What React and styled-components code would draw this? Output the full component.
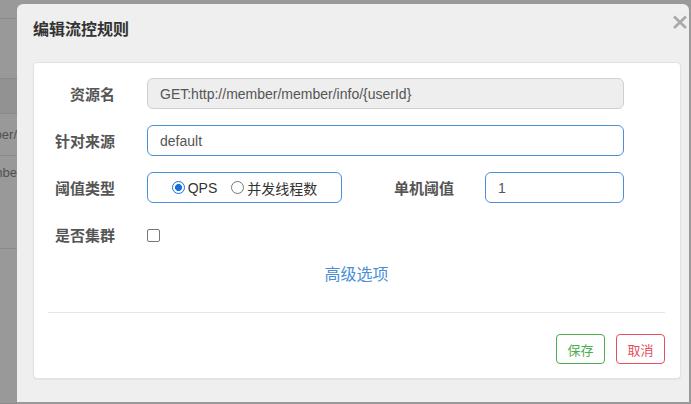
import React from "react";
import styled, { createGlobalStyle } from "styled-components";

const FONT = `"Liberation Sans", "Noto Sans CJK SC", sans-serif`;

const GlobalStyle = createGlobalStyle`
  html, body {
    margin: 0;
    padding: 0;
    width: 691px;
    height: 404px;
    overflow: hidden;
    background: #fff;
    font-family: ${FONT};
  }
  * { box-sizing: border-box; }
`;

/* ---------- background page (dimmed by backdrop) ---------- */
const Page = styled.div`
  display: flex;
  flex-direction: column;
  width: 691px;
  height: 404px;
  background: #fff;
`;

const PageRow = styled.div`
  display: flex;
  justify-content: flex-end;
  align-items: ${(p) => (p.$top ? "flex-start" : "center")};
  width: 17px;
  height: ${(p) => p.$h}px;
  padding-top: ${(p) => (p.$top ? 9 : 0)}px;
  border-bottom: 1px solid #e6e6e6;
  background: ${(p) => (p.$head ? "#f4f4f4" : "#fff")};
  overflow: hidden;
  white-space: nowrap;
  font-size: 13px;
  color: #888;
  flex-shrink: 0;
`;

const Backdrop = styled.div`
  position: fixed;
  inset: 0;
  background: rgba(0, 0, 0, 0.4);
`;

/* ---------- modal ---------- */
const Modal = styled.div`
  position: fixed;
  left: 17px;
  top: 4px;
  width: 672px;
  height: 398px;
  display: flex;
  flex-direction: column;
  padding: 0 8px 0 16px;
  background: #efefef;
  border-radius: 6px 6px 0 0;
`;

const ModalHeader = styled.div`
  display: flex;
  justify-content: space-between;
  align-items: flex-start;
  height: 58px;
  padding: 11px 0 0 0;
  margin-right: -6px;
  flex-shrink: 0;
`;

const Title = styled.h4`
  margin: 0;
  padding-top: 4px;
  font-size: 16px;
  line-height: 22px;
  font-weight: bold;
  color: #333;
`;

const CloseButton = styled.button`
  border: 0;
  background: none;
  padding: 0;
  width: 14px;
  height: 14px;
  display: flex;
  cursor: pointer;
`;

const Card = styled.div`
  display: flex;
  flex-direction: column;
  height: 317px;
  padding: 15px 15px 14px 14px;
  background: #fff;
  border: 1px solid #e2e2e2;
  border-radius: 4px;
  box-shadow: 0 1px 1px rgba(0, 0, 0, 0.05);
`;

const Form = styled.div`
  display: flex;
  flex-direction: column;
  gap: 16px;
`;

const FormRow = styled.div`
  display: flex;
  align-items: center;
  height: 31px;
`;

const Label = styled.label`
  width: ${(p) => p.$w || 67}px;
  margin-right: ${(p) => p.$gap || 32}px;
  flex-shrink: 0;
  text-align: right;
  font-size: 15px;
  font-weight: bold;
  color: #555;
  white-space: nowrap;
`;

const TextInput = styled.input`
  width: ${(p) => p.$w}px;
  height: 31px;
  padding: 0 12px;
  border: 1px solid ${(p) => (p.disabled ? "#cfcfcf" : "#4a8fd8")};
  border-radius: 6px;
  background: ${(p) => (p.disabled ? "#eee" : "#fff")};
  font-family: ${FONT};
  font-size: 14px;
  color: #555;
  -webkit-text-fill-color: #555;
  opacity: 1;
  outline: none;
`;

const RadioGroup = styled.div`
  display: flex;
  align-items: center;
  justify-content: center;
  width: 195px;
  height: 31px;
  border: 1px solid #4a8fd8;
  border-radius: 6px;
  font-size: 14px;
  color: #333;
`;

const RadioOption = styled.label`
  display: flex;
  align-items: center;
  gap: 3px;
  margin-left: ${(p) => (p.$first ? 0 : 14)}px;
`;

const RadioDot = styled.span`
  width: 13px;
  height: 13px;
  border-radius: 50%;
  flex-shrink: 0;
  border: ${(p) => (p.$checked ? "1.5px solid #1a6fe0" : "1px solid #777")};
  background: ${(p) =>
    p.$checked
      ? "radial-gradient(circle, #1a6fe0 0 3.2px, #fff 3.8px)"
      : "#fff"};
`;

const Checkbox = styled.span`
  width: 13px;
  height: 13px;
  border: 1px solid #777;
  border-radius: 2px;
  background: #fff;
  margin-top: 2px;
`;

const AdvancedLink = styled.a`
  align-self: center;
  margin-top: 14px;
  font-size: 16px;
  line-height: 22px;
  color: #4a8fd6;
  text-decoration: none;
  cursor: pointer;
`;

const Divider = styled.hr`
  margin: 26px 0 0 0;
  height: 1px;
  border: 0;
  background: #e5e5e5;
`;

const Footer = styled.div`
  display: flex;
  justify-content: flex-end;
  gap: 11px;
  margin-top: 21px;
`;

const Button = styled.button`
  width: 49px;
  height: 30px;
  padding: 0;
  border: 1px solid ${(p) => p.$color};
  border-radius: 4px;
  background: #fff;
  color: ${(p) => p.$color};
  font-family: ${FONT};
  font-size: 13px;
  cursor: pointer;
`;

export default function App() {
  return (
    <>
      <GlobalStyle />
      <Page>
        <PageRow $h={19} />
        <PageRow $h={60} />
        <PageRow $h={35} $head />
        <PageRow $h={42}>member/</PageRow>
        <PageRow $h={93} $top>membe</PageRow>
        <PageRow $h={155} />
      </Page>
      <Backdrop />
      <Modal>
        <ModalHeader>
          <Title>编辑流控规则</Title>
          <CloseButton aria-label="close">
            <svg width="14" height="14" viewBox="0 0 14 14">
              <path
                d="M1 1.5 L13 13 M13 1.5 L1 13"
                stroke="#a9a9a9"
                strokeWidth="2.6"
                strokeLinecap="butt"
              />
            </svg>
          </CloseButton>
        </ModalHeader>
        <Card>
          <Form>
            <FormRow>
              <Label>资源名</Label>
              <TextInput
                $w={477}
                disabled
                defaultValue="GET:http://member/member/info/{userId}"
              />
            </FormRow>
            <FormRow>
              <Label>针对来源</Label>
              <TextInput $w={477} defaultValue="default" />
            </FormRow>
            <FormRow>
              <Label>阈值类型</Label>
              <RadioGroup>
                <RadioOption $first>
                  <RadioDot $checked />
                  QPS
                </RadioOption>
                <RadioOption>
                  <RadioDot />
                  并发线程数
                </RadioOption>
              </RadioGroup>
              <Label $w={112} $gap={31}>单机阈值</Label>
              <TextInput $w={139} defaultValue="1" />
            </FormRow>
            <FormRow>
              <Label>是否集群</Label>
              <Checkbox />
            </FormRow>
          </Form>
          <AdvancedLink>高级选项</AdvancedLink>
          <Divider />
          <Footer>
            <Button $color="#4cae4c">保存</Button>
            <Button $color="#e6505c">取消</Button>
          </Footer>
        </Card>
      </Modal>
    </>
  );
}
